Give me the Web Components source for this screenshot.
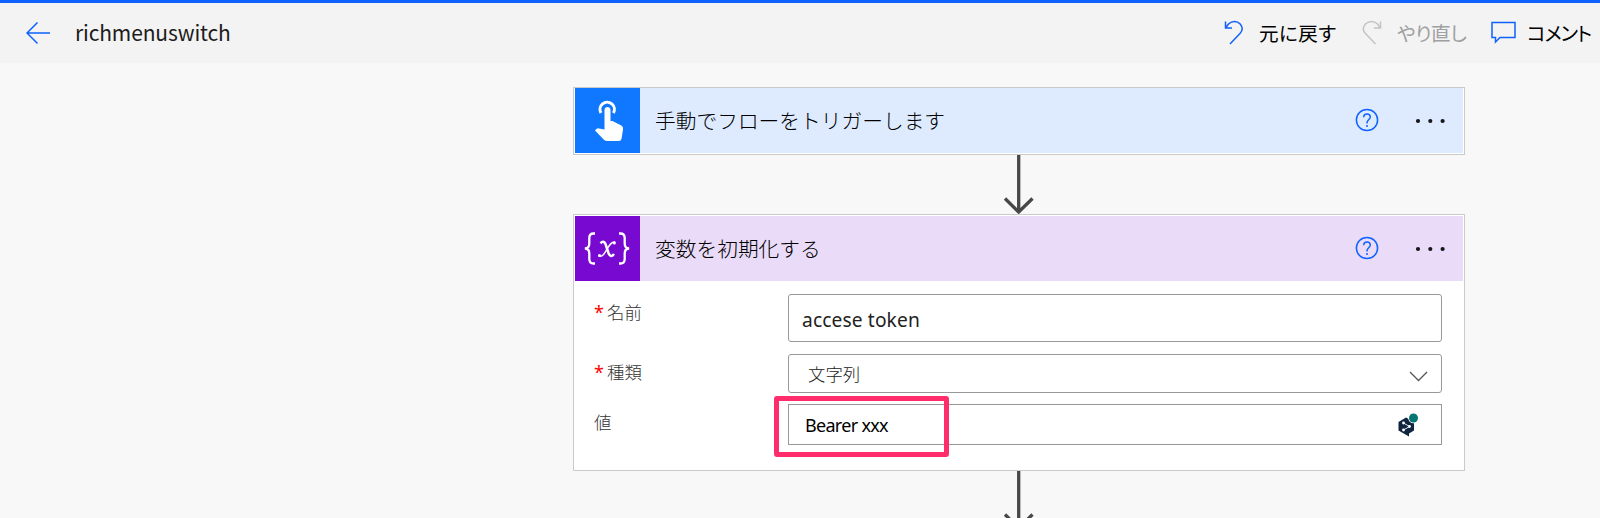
<!DOCTYPE html>
<html lang="ja">
<head>
<meta charset="utf-8">
<title>richmenuswitch</title>
<style>
html,body{margin:0;height:518px;overflow:hidden;background:#f8f8f8}
body{font-family:"Noto Sans","Noto Sans CJK JP",sans-serif;color:#111}
</style>
</head>
<body>
<flow-app></flow-app>
<script>
function define(name, html) {
  const template = document.createElement('template');
  template.innerHTML = html;
  customElements.define(name, class extends HTMLElement {
    constructor() {
      super();
      this.attachShadow({mode: 'open'}).append(template.content.cloneNode(true));
    }
  });
}

define('tool-button', `
<style>
:host{display:flex;flex:none;align-items:center;white-space:nowrap;font:400 19.6px/28px "Noto Sans CJK JP",sans-serif;font-feature-settings:"palt";color:#000}
.label{margin-left:var(--gap,14px);letter-spacing:var(--ls,0)}
::slotted(svg){display:block}
</style>
<slot name="icon"></slot><span class="label"><slot></slot></span>`);

define('flow-header', `
<style>
:host{display:flex;box-sizing:border-box;height:63px;border-top:3px solid #0f62fe;background:#f3f3f3;align-items:center;padding:0 0 0 26px}
svg{display:block;flex:none;fill:none;stroke:#0f62fe;stroke-width:1.5}
h1{margin:0 0 0 25px;font:400 21px/30px "Noto Sans CJK JP",sans-serif;color:#1c1c1c;flex:1;letter-spacing:-.13px;padding-bottom:2px}
.undo{width:138px;--ls:.4px}
.undo svg,.redo svg{margin:-2px 0 0 -1px;padding-right:1px}
.redo{color:#a0a0a0;width:128px;--ls:-.3px}
.comment{width:109px;--ls:-1.1px}
.comment svg{margin-top:-1px}
.redo svg{stroke:#c4c4c4}
</style>
<svg width="24" height="23" viewBox="0 0 24 23"><path d="M24 11H1M11.500 .5L1 11L11.500 21.500"/></svg>
<h1>richmenuswitch</h1>
<tool-button class="undo"><svg slot="icon" width="20" height="25" viewBox="0 0 20 25"><path d="M1.500 1.500V8H8M2 7.500L4.500 4C8 .5 13 .5 16.200 4C19 7.500 18.500 11 16 13.500L6 24"/></svg>元に戻す</tool-button>
<tool-button class="redo"><svg slot="icon" width="20" height="25" viewBox="0 0 20 25"><path d="M18.500 1.500V8H12M18 7.500L15.500 4C12 .5 7 .5 3.500 4C.5 7.500 1 11 3.500 13.500L13.500 24"/></svg>やり直し</tool-button>
<tool-button class="comment" style="--gap:11px"><svg slot="icon" width="25" height="23" viewBox="0 0 25 23"><path d="M1 1.500H24V16.500H9L4.500 21V16.500H1Z"/></svg>コメント</tool-button>`);

define('card-header', `
<style>
:host{display:flex;align-items:center;height:65px;background:var(--tint)}
.icon{width:65px;height:65px;flex:none;background:var(--brand)}
.icon ::slotted(svg){display:block}
.title{flex:1;margin-left:15px;font:300 20.73px/30px "Noto Sans CJK JP",sans-serif;color:#000;white-space:nowrap;padding-bottom:1px}
.help{display:block;margin:0 36px 2px 0}
.dots{display:block;margin-right:18px}
</style>
<div class="icon"><slot name="icon"></slot></div>
<div class="title"><slot></slot></div>
<svg class="help" width="24" height="24" viewBox="0 0 24 24" fill="none" stroke="#0f62fe" stroke-width="1.5"><circle cx="12" cy="12" r="10.600"/><path d="M8.700 9.200C8.700 4.800 15.300 4.900 15.300 9C15.300 11.500 12 12 12 14.700V15.500"/><circle cx="12" cy="18" r="1" fill="#0f62fe" stroke="none"/></svg>
<svg class="dots" width="30" height="6" viewBox="0 0 30 6" fill="#161616"><circle cx="3" cy="3" r="2.100"/><circle cx="15.300" cy="3" r="2.100"/><circle cx="27.600" cy="3" r="2.100"/></svg>`);

define('flow-card', `
<style>
:host{display:block;box-sizing:border-box;width:892px;border:1px solid #cacaca;background:#fff;padding:var(--pad)}
</style>
<slot></slot>`);

define('flow-arrow', `
<style>
:host{display:block;height:59px;width:892px}
svg{display:block;margin:0 auto}
</style>
<svg width="32" height="59" viewBox="0 0 32 59" fill="none" stroke="#484848" stroke-width="3.300"><path d="M15.700 0V57M2 43.500L15.700 57L29.500 43.500"/></svg>`);

define('form-row', `
<style>
:host{display:flex;align-items:flex-start;height:var(--h);margin-bottom:var(--mb,0)}
.label{width:194px;flex:none;font:300 17.4px/26px "Noto Sans CJK JP",sans-serif;color:#333;padding-top:5px;display:flex}
.star{width:13px;color:#f00;font:400 18px/26px "Noto Sans",sans-serif;display:none}
:host([required]) .star{display:block}
.field{box-sizing:border-box;width:654px;height:100%;border:1px solid #999;border-radius:var(--r,3px);display:flex;align-items:center;justify-content:space-between;padding:var(--p);font:var(--f);letter-spacing:var(--ls,0);color:var(--c,#222)}
</style>
<div class="label"><span class="star">*</span><slot name="label"></slot></div>
<div class="field"><slot></slot></div>`);

define('variable-form', `
<style>
:host{display:block;height:189px;box-sizing:border-box;padding:13px 0 0 19px}
.name{--h:48px;--mb:12px;--p:4px 13px 0;--f:400 19.2px/28px "Noto Sans",sans-serif;--ls:.12px}
.type{--h:39px;--mb:11px;--p:1px 13px 0 19px;--f:300 17.4px/26px "Noto Sans CJK JP",sans-serif}
.type svg{margin-top:4px}
.value{--h:41px;--r:0;--p:1px 22px 0 16px;--f:400 18px/26px "Noto Sans",sans-serif;--ls:-.7px;--c:#000}
.mark{position:absolute;box-sizing:border-box;left:180px;top:-8px;width:175px;height:61px;border:5px solid #ff2d6b;border-radius:3px}
.wrap{position:relative}
</style>
<form-row class="name" required><span slot="label">名前</span><span>accese token</span></form-row>
<form-row class="type" required><span slot="label">種類</span><span>文字列</span><svg width="19" height="11" viewBox="0 0 19 11" fill="none" stroke="#555" stroke-width="1.300"><path d="M1 1L9.500 9.500L18 1"/></svg></form-row>
<div class="wrap"><form-row class="value"><span slot="label">値</span><span>Bearer xxx</span>
<svg width="22" height="24" viewBox="0 0 22 24"><path d="M9 4.500L17 9V17.500L12 20.500V23.500L1.500 17.500V9Z" fill="#10253f"/><path d="M6.500 10L12.500 13.500L6.500 17" fill="none" stroke="#dfe8ef" stroke-width="1"/><g fill="#fff"><circle cx="6.500" cy="10" r="1.400"/><circle cx="12.500" cy="13.500" r="1.400"/><circle cx="6.500" cy="17" r="1.400"/></g><circle cx="16.500" cy="5" r="5.300" fill="#fff"/><circle cx="16.500" cy="5" r="4.500" fill="#057672"/></svg></form-row>
<div class="mark"></div></div>`);

define('flow-app', `
<style>
:host{display:block;height:518px;overflow:hidden;background:#f8f8f8}
main{margin-left:573px;padding-top:24px}
.trigger{--tint:#deebff;--brand:#0f78ff}
.variable{--tint:#eadcf8;--brand:#7709d1}
</style>
<flow-header></flow-header>
<main>
<flow-card style="--pad:0 1px 1px"><card-header class="trigger"><svg slot="icon" width="65" height="65" viewBox="0 -.5 65 65"><path d="M26.200 26.500A7.200 7.200 0 1 1 38.600 26.500" transform="translate(-.2 -2)" fill="none" stroke="#fff" stroke-width="3"/><path d="M29.500 21.500C29.500 17.400 35.500 17.400 35.500 21.500V32.500H37.500L46.300 36.900Q48.400 38 48.100 40.500L46.600 50Q46.200 52.500 43.700 52.500H32Q30.300 52.500 29.200 51.400L20 42L21.700 40.300Q22.500 39.600 23.800 39.900L29.500 41.100Z" fill="#fff"/></svg>手動でフローをトリガーします</card-header></flow-card>
<flow-arrow></flow-arrow>
<flow-card style="--pad:1px 1px 0"><card-header class="variable"><svg slot="icon" width="65" height="65" viewBox=".5 0 65 65" fill="none" stroke="#fff" stroke-width="2.300"><path d="M20.500 17.500H19Q14.800 17.500 14.800 22V27.500Q14.800 32.500 10.300 32.500Q14.800 32.500 14.800 37.500V43Q14.800 47.500 19 47.500H20.500M44.500 17.500H46Q50.200 17.500 50.200 22V27.500Q50.200 32.500 54.700 32.500Q50.200 32.500 50.200 37.500V43Q50.200 47.500 46 47.500H44.500"/><path d="M26 27.300Q29 24 31 28L34 37Q36 42.500 39.500 38" stroke-width="2.500"/><path d="M41 26.300C36 24 32 35 29 38.500Q26.500 41.500 24 39.500" stroke-width="1.400"/><g fill="#fff" stroke="none"><circle cx="39.800" cy="27" r="1.500"/><circle cx="25" cy="39.500" r="1.500"/></g></svg>変数を初期化する</card-header><variable-form></variable-form></flow-card>
<flow-arrow></flow-arrow>
</main>`);
</script>
</body>
</html>
